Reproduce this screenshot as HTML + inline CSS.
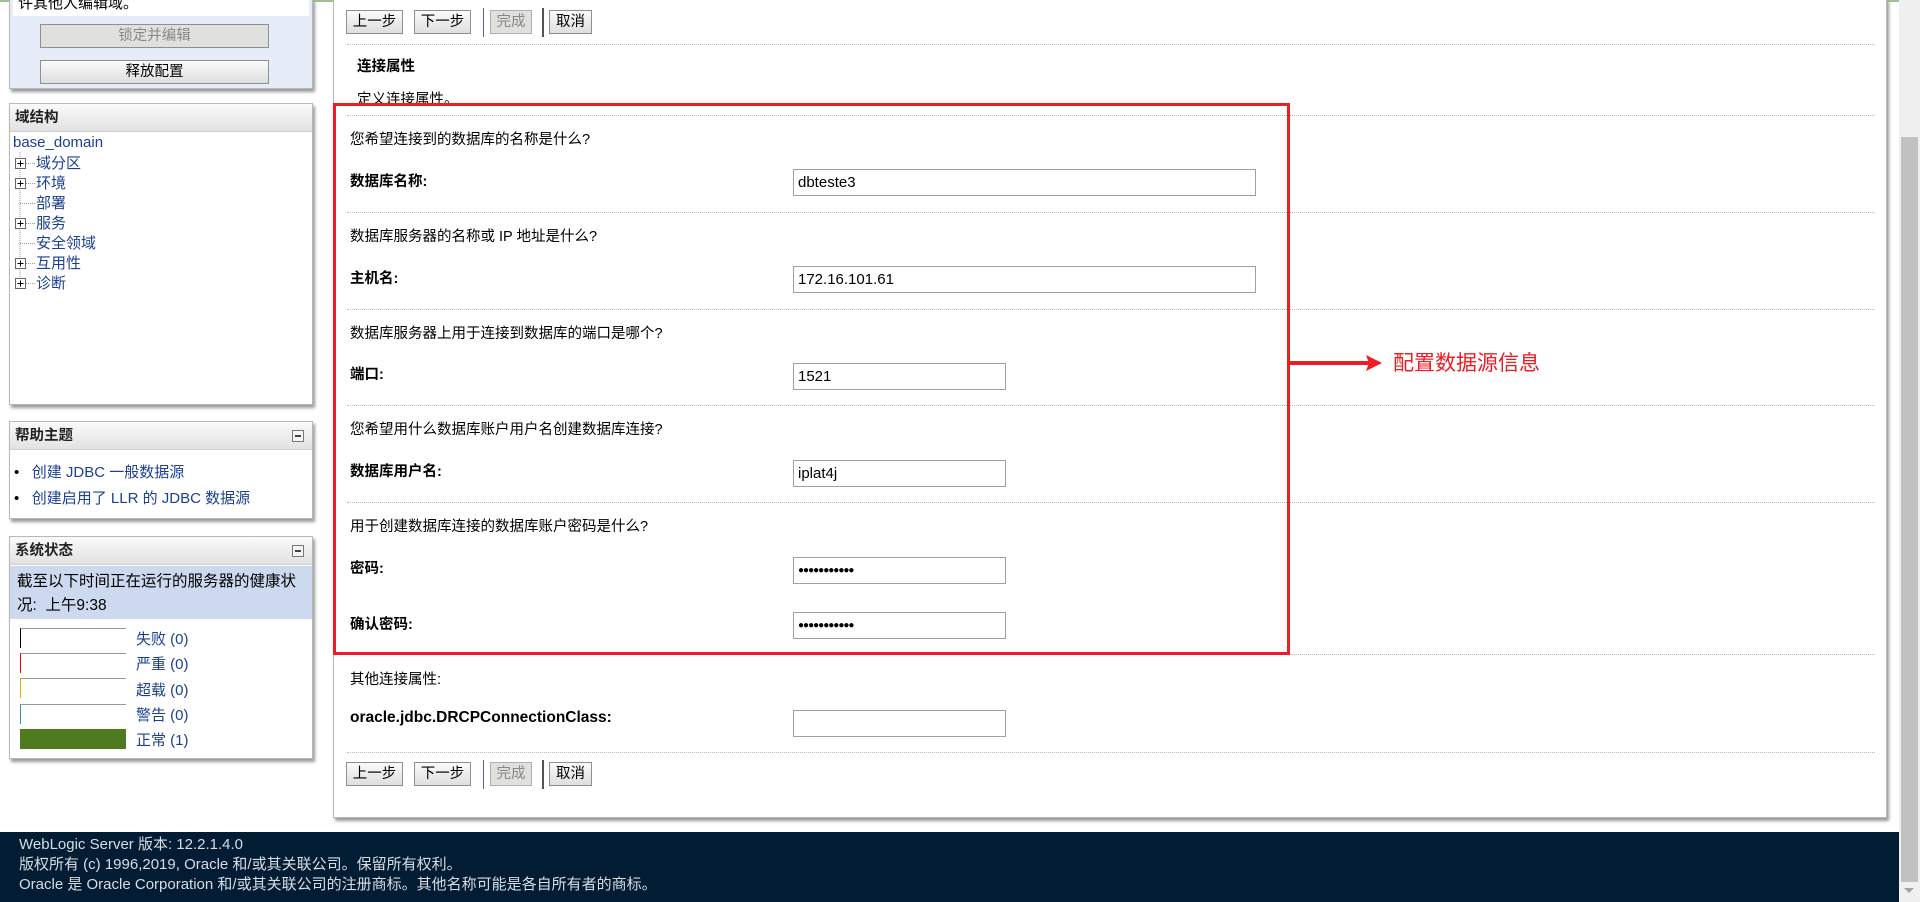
<!DOCTYPE html>
<html><head><meta charset="utf-8">
<style>
*{margin:0;padding:0;box-sizing:border-box}
body{width:1920px;height:902px;position:relative;overflow:hidden;background:#fff;font-family:"Liberation Sans","Noto Sans CJK SC",sans-serif;font-size:14.5px;color:#000}
.a{position:absolute;white-space:nowrap}
.panel{position:absolute;background:#fff;border:1px solid #b8b8b8;box-shadow:2px 3px 3px #9a9a9a}
.hdr{position:absolute;left:0;right:0;top:0;height:28px;background:linear-gradient(#fafafa,#e2e2e2);border-bottom:1px solid #d0d0d0;font-weight:bold;font-size:14.5px;line-height:28px;padding-left:5px;color:#222}
.mini{position:absolute;right:8px;top:8px;width:12px;height:12px;border:1px solid #777;background:#f4f4f4}
.mini:after{content:"";position:absolute;left:2px;right:2px;top:4px;height:2px;background:#444}
.lnk{color:#1c3f94}
.btn{position:absolute;height:24px;border:1px solid #8f8f8f;background:linear-gradient(#fbfbfb,#dedede);font-size:14.5px;line-height:22px;text-align:center}
.dot{position:absolute;left:347px;width:1528px;border-top:1px dotted #bdbdbd;height:0}
.inp{position:absolute;height:27px;border:1px solid #a0a0a0;background:#fff;font-size:15px;line-height:25px;padding-left:4px}
.lbl{font-weight:bold}
.bar{position:absolute;left:20px;width:106px;height:20px;border-top:1px solid #999}
</style></head><body>
<div class="a" style="left:0;top:0;width:1899px;height:2px;background:#9fc28f"></div>

<div class="panel" style="left:9px;top:-2px;width:304px;height:91px;background:#e6edf9">
 <div class="a" style="left:3px;top:0;width:296px;height:17px;background:#fff;font-size:15px;line-height:10px;padding-left:5px">许其他人编辑域。</div>
 <div class="btn" style="left:30px;top:25px;width:229px;color:#888;background:#e0e0dc">锁定并编辑</div>
 <div class="btn" style="left:30px;top:61px;width:229px">释放配置</div>
</div>

<div class="panel" style="left:9px;top:103px;width:304px;height:302px">
 <div class="hdr">域结构</div>
</div>
<div class="a lnk" style="left:13px;top:134px;font-size:15px">base_domain</div>
<svg class="a" style="left:14px;top:152px" width="24" height="140">
 <line x1="6" y1="0" x2="6" y2="132" stroke="#999" stroke-dasharray="1,1"/>
 <g fill="#fff" stroke="#666">
 <rect x="1.5" y="6.5" width="10" height="10"/><rect x="1.5" y="26.5" width="10" height="10"/><rect x="1.5" y="66.5" width="10" height="10"/><rect x="1.5" y="106.5" width="10" height="10"/><rect x="1.5" y="126.5" width="10" height="10"/></g>
 <g stroke="#000"><path d="M3.5 11.5h6M6.5 8.5v6M3.5 31.5h6M6.5 28.5v6M3.5 71.5h6M6.5 68.5v6M3.5 111.5h6M6.5 108.5v6M3.5 131.5h6M6.5 128.5v6"/></g>
 <g stroke="#999" stroke-dasharray="1,1"><path d="M12 11.5h10M12 31.5h10M6 51.5h16M12 71.5h10M6 91.5h16M12 111.5h10M12 131.5h10"/></g>
</svg>
<div class="a lnk" style="left:36px;top:154px;line-height:20px;font-size:15px">域分区<br>环境<br>部署<br>服务<br>安全领域<br>互用性<br>诊断</div>

<div class="panel" style="left:9px;top:421px;width:304px;height:98px">
 <div class="hdr">帮助主题<div class="mini"></div></div>
 <div class="a" style="left:4px;top:38px;line-height:26px;font-size:15px">•&nbsp;&nbsp; <span class="lnk">创建 JDBC 一般数据源</span><br>•&nbsp;&nbsp; <span class="lnk">创建启用了 LLR 的 JDBC 数据源</span></div>
</div>

<div class="panel" style="left:9px;top:536px;width:304px;height:223px">
 <div class="hdr">系统状态<div class="mini"></div></div>
 <div class="a" style="left:0;top:29px;width:302px;height:53px;background:#ccd9ee;padding:4px 7px 4px 7px;font-size:15.5px;line-height:24px;white-space:normal;word-break:break-all">截至以下时间正在运行的服务器的健康状况:&nbsp; 上午9:38</div>
</div>
<div class="bar" style="top:628px;border-left:1px solid #000"></div>
<div class="bar" style="top:653px;border-left:1px solid #d00"></div>
<div class="bar" style="top:678px;border-left:1px solid #e5b300"></div>
<div class="bar" style="top:704px;border-left:1px solid #3a8fa0"></div>
<div class="bar" style="top:729px;background:#4f7a20;border:none"></div>
<div class="a lnk" style="left:136px;top:627px;line-height:25.3px;font-size:15px">失败 (0)<br>严重 (0)<br>超载 (0)<br>警告 (0)<br>正常 (1)</div>

<div class="panel" style="left:333px;top:-2px;width:1554px;height:820px"></div>

<div class="btn" style="left:346px;top:10px;width:57px">上一步</div>
<div class="btn" style="left:414px;top:10px;width:57px">下一步</div>
<div class="a" style="left:483px;top:8px;width:1px;height:29px;background:#666"></div>
<div class="btn" style="left:490px;top:10px;width:42px;color:#888;background:#e0e0dc;border-color:#b0b0b0">完成</div>
<div class="a" style="left:542px;top:8px;width:2px;height:29px;background:#555"></div>
<div class="btn" style="left:549px;top:10px;width:43px">取消</div>
<div class="dot" style="top:44px"></div>
<div class="a lbl" style="left:357px;top:55px">连接属性</div>
<div class="a" style="left:357px;top:88px">定义连接属性。</div>

<div class="dot" style="top:115px"></div>
<div class="a" style="left:350px;top:128px">您希望连接到的数据库的名称是什么?</div>
<div class="a lbl" style="left:350px;top:170px">数据库名称:</div>
<div class="inp" style="left:793px;top:169px;width:463px">dbteste3</div>
<div class="dot" style="top:212px"></div>
<div class="a" style="left:350px;top:225px">数据库服务器的名称或 IP 地址是什么?</div>
<div class="a lbl" style="left:350px;top:267px">主机名:</div>
<div class="inp" style="left:793px;top:266px;width:463px">172.16.101.61</div>
<div class="dot" style="top:309px"></div>
<div class="a" style="left:350px;top:322px">数据库服务器上用于连接到数据库的端口是哪个?</div>
<div class="a lbl" style="left:350px;top:363px">端口:</div>
<div class="inp" style="left:793px;top:363px;width:213px">1521</div>
<div class="dot" style="top:405px"></div>
<div class="a" style="left:350px;top:418px">您希望用什么数据库账户用户名创建数据库连接?</div>
<div class="a lbl" style="left:350px;top:460px">数据库用户名:</div>
<div class="inp" style="left:793px;top:460px;width:213px">iplat4j</div>
<div class="dot" style="top:502px"></div>
<div class="a" style="left:350px;top:515px">用于创建数据库连接的数据库账户密码是什么?</div>
<div class="a lbl" style="left:350px;top:557px">密码:</div>
<div class="inp" style="left:793px;top:557px;width:213px;font-size:10px;letter-spacing:-1px">●●●●●●●●●●●</div>
<div class="a lbl" style="left:350px;top:613px">确认密码:</div>
<div class="inp" style="left:793px;top:612px;width:213px;font-size:10px;letter-spacing:-1px">●●●●●●●●●●●</div>
<div class="dot" style="top:654px"></div>
<div class="a" style="left:350px;top:668px">其他连接属性:</div>
<div class="a lbl" style="left:350px;top:709px;font-size:15.5px">oracle.jdbc.DRCPConnectionClass:</div>
<div class="inp" style="left:793px;top:710px;width:213px"></div>
<div class="dot" style="top:752px"></div>
<div class="btn" style="left:346px;top:762px;width:57px">上一步</div>
<div class="btn" style="left:414px;top:762px;width:57px">下一步</div>
<div class="a" style="left:483px;top:760px;width:1px;height:29px;background:#666"></div>
<div class="btn" style="left:490px;top:762px;width:42px;color:#888;background:#e0e0dc;border-color:#b0b0b0">完成</div>
<div class="a" style="left:542px;top:760px;width:2px;height:29px;background:#555"></div>
<div class="btn" style="left:549px;top:762px;width:43px">取消</div>

<div class="a" style="left:333px;top:103px;width:957px;height:552px;border:3px solid #ee1c25"></div>
<div class="a" style="left:1289px;top:361px;width:80px;height:4px;background:#ee1c25"></div>
<svg class="a" style="left:1366px;top:355px" width="17" height="17"><path d="M0 0L16 8L0 16L3 8Z" fill="#ee1c25"/></svg>
<div class="a" style="left:1393px;top:347px;font-size:21px;color:#ee1c25">配置数据源信息</div>

<div class="a" style="left:0;top:832px;width:1899px;height:70px;background:#011c33;color:#d8dde4;font-size:15px;line-height:20px;padding:3px 0 0 19px">WebLogic Server 版本: 12.2.1.4.0<br>版权所有 (c) 1996,2019, Oracle 和/或其关联公司。保留所有权利。<br>Oracle 是 Oracle Corporation 和/或其关联公司的注册商标。其他名称可能是各自所有者的商标。</div>

<div class="a" style="left:1899px;top:0;width:21px;height:902px;background:#f0f0f0"></div>
<div class="a" style="left:1901px;top:137px;width:17px;height:745px;background:#c1c1c1"></div>
<svg class="a" style="left:1903px;top:887px" width="12" height="8"><path d="M1 1H11L6 6Z" fill="#a3a3a3"/></svg>
</body></html>
